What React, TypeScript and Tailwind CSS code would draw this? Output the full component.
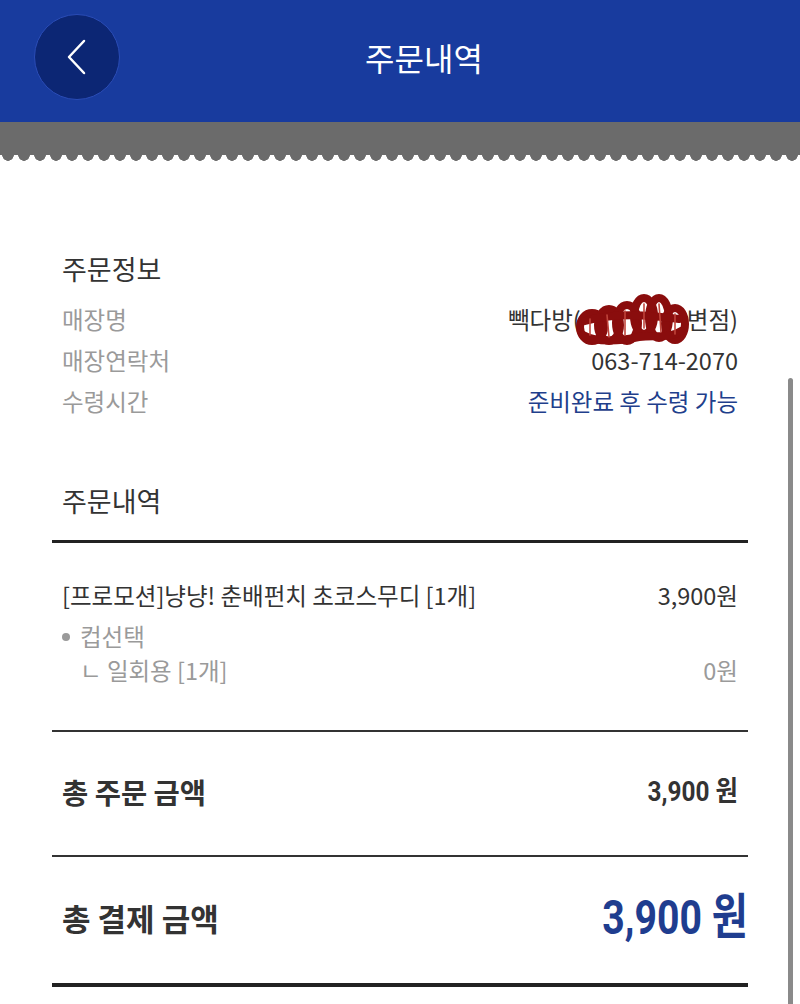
import React from "react";

const font = { fontFamily: '"Noto Sans CJK KR", "Noto Sans", sans-serif' };

function Row({ label, value, blue }: { label: string; value: React.ReactNode; blue?: boolean }) {
  return (
    <div className="flex h-[41px] items-center justify-between px-[10px] text-[23.5px]">
      <span className="text-[#9a9a9a]">{label}</span>
      <span className={blue ? "text-[#1f3f8c]" : "text-[#333333]"}>{value}</span>
    </div>
  );
}

function Scribble() {
  return (
    <svg
      className="absolute left-[-6px] top-[-17px] pointer-events-none"
      width="116"
      height="54"
      viewBox="0 0 116 54"
      fill="none"
    >
      <g stroke="#8a0d0d" strokeWidth="8" strokeLinecap="round" strokeLinejoin="round">
        <ellipse cx="17" cy="34" rx="12" ry="14" />
        <ellipse cx="34" cy="32" rx="11" ry="16" />
        <ellipse cx="52" cy="30" rx="11" ry="18" />
        <ellipse cx="69" cy="23" rx="10" ry="18" />
        <ellipse cx="84" cy="25" rx="10" ry="20" />
        <ellipse cx="100" cy="31" rx="10" ry="16" />
        <path d="M8 42 C22 50 46 48 64 44 C80 42 94 46 106 38" />
        <path d="M10 28 C30 22 62 20 104 26" />
      </g>
      <g stroke="#c0453c" strokeWidth="1.6" strokeLinecap="round">
        <path d="M15 26 L15 42" />
        <path d="M32 22 L34 44" />
        <path d="M50 18 L50 42" />
        <path d="M69 11 L69 35" />
        <path d="M84 11 L86 39" />
        <path d="M100 21 L100 41" />
      </g>
    </svg>
  );
}

export default function App() {
  return (
    <div className="relative min-h-[1004px] w-[800px] overflow-hidden bg-white" style={font}>
      {/* Header */}
      <div className="relative flex h-[122px] items-center bg-[#183b9e] pb-[8px]">
        <div className="absolute left-[34px] top-[14px] flex h-[86px] w-[86px] items-center justify-center rounded-full border border-[#2a4cb6] bg-[#0c2674]">
          <svg width="26" height="38" viewBox="0 0 26 38" fill="none">
            <path d="M20 3 L5 19 L20 35" stroke="white" strokeWidth="2.5" strokeLinecap="round" strokeLinejoin="round" />
          </svg>
        </div>
        <div className="flex-1 pl-[48px] text-center text-[32px] text-white">주문내역</div>
      </div>

      {/* Gray band with scalloped edge */}
      <div className="h-[33px] bg-[#6b6b6b]" />
      <div className="h-[6px] bg-[radial-gradient(circle_at_50%_0,#6b6b6b_5.5px,transparent_6px)] bg-[length:16px_6px] bg-repeat-x" />

      {/* Content */}
      <div className="mx-[52px]">
        <div className="mt-[90px] flex h-[36px] items-center px-[10px] text-[27px] text-[#333333]">주문정보</div>
        <div className="mt-[12px]">
          <Row
            label="매장명"
            value={
              <span className="inline-flex items-center">
                <span>빽다방(</span>
                <span className="relative inline-block h-[20px] w-[106px]">
                  <Scribble />
                </span>
                <span>변점)</span>
              </span>
            }
          />
          <Row label="매장연락처" value="063-714-2070" />
          <Row label="수령시간" value="준비완료 후 수령 가능" blue />
        </div>

        <div className="mt-[61px] flex h-[36px] items-center px-[10px] text-[27px] text-[#333333]">주문내역</div>
        <div className="mt-[21px] h-[3px] bg-[#222222]" />

        <div className="mt-[35px] flex h-[36px] items-center justify-between px-[10px] text-[23.5px] text-[#333333]">
          <span>[프로모션]냥냥! 춘배펀치 초코스무디 [1개]</span>
          <span>3,900원</span>
        </div>
        <div className="mt-[6px] flex h-[34px] items-center px-[10px] text-[23.5px] text-[#9a9a9a]">
          <span className="mr-[10px] inline-block h-[8px] w-[8px] rounded-full bg-[#9a9a9a]" />
          <span>컵선택</span>
        </div>
        <div className="flex h-[34px] items-center justify-between px-[10px] text-[23.5px] text-[#9a9a9a]">
          <span className="pl-[18px]">ㄴ 일회용 [1개]</span>
          <span>0원</span>
        </div>
        <div className="mt-[42px] h-[2px] bg-[#333333]" />

        <div className="mt-[40px] flex h-[40px] items-center justify-between px-[10px] text-[#333333]">
          <span className="text-[28.5px] font-bold">총 주문 금액</span>
          <span className="origin-right scale-x-[0.87] text-[28px] font-bold" style={{ fontFamily: 'Roboto, "Noto Sans CJK KR", sans-serif' }}>
            3,900 원
          </span>
        </div>
        <div className="mt-[43px] h-[2px] bg-[#333333]" />

        <div className="mt-[36px] flex h-[50px] items-center justify-between pl-[10px] text-[#333333]">
          <span className="text-[31px] font-bold">총 결제 금액</span>
          <span
            className="origin-right scale-x-[0.8] text-[49px] font-bold text-[#1f3d8f]"
            style={{ fontFamily: 'Roboto, "Noto Sans CJK KR", sans-serif' }}
          >
            3,900 원
          </span>
        </div>
        <div className="mt-[40px] h-[4px] bg-[#222222]" />
      </div>

      {/* Scrollbar */}
      <div className="absolute left-[788px] top-[378px] h-[640px] w-[5px] rounded-full bg-[#8a8a8a]" />
    </div>
  );
}
